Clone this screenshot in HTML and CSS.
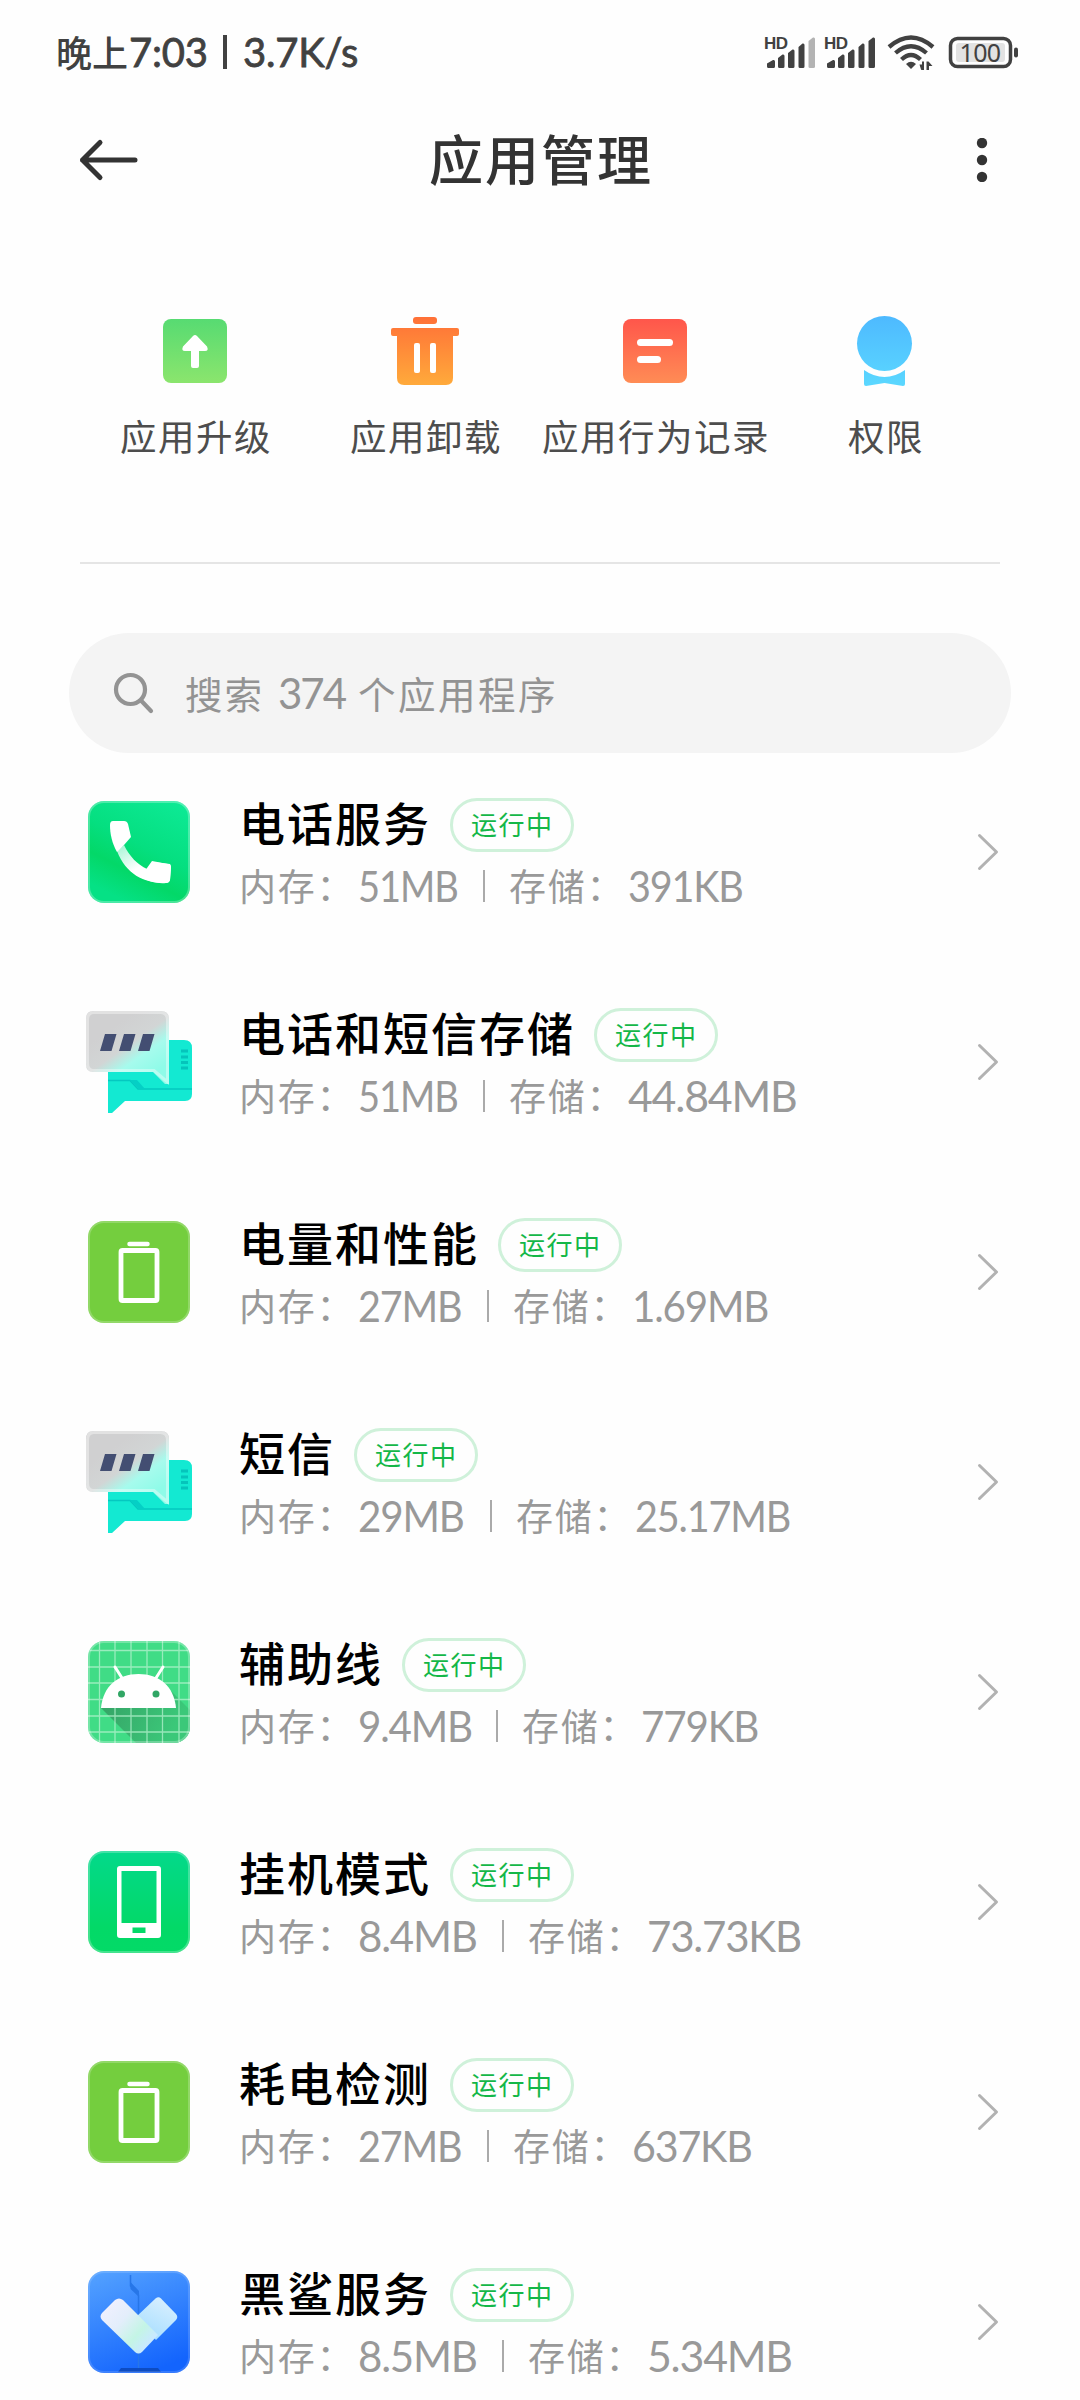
FILE: index.html
```html
<!DOCTYPE html>
<html lang="zh-CN">
<head>
<meta charset="utf-8">
<title>应用管理</title>
<link rel="stylesheet" href="styles.css">
</head>
<body>
<svg class="defs" width="0" height="0" aria-hidden="true">
  <defs>
    <linearGradient id="gUp" x1="0" y1="0" x2="0" y2="1"><stop offset="0" stop-color="#57db72"/><stop offset="1" stop-color="#8be56d"/></linearGradient>
    <linearGradient id="gTrash" gradientUnits="userSpaceOnUse" x1="0" y1="4" x2="0" y2="72"><stop offset="0" stop-color="#ff7037"/><stop offset="1" stop-color="#ffaa3b"/></linearGradient>
    <linearGradient id="gLog" x1="0" y1="0" x2="0" y2="1"><stop offset="0" stop-color="#ff564b"/><stop offset="1" stop-color="#ff8c55"/></linearGradient>
    <linearGradient id="gPerm" gradientUnits="userSpaceOnUse" x1="0" y1="4" x2="0" y2="74"><stop offset="0" stop-color="#4ebaff"/><stop offset="1" stop-color="#5bd8ff"/></linearGradient>
    <linearGradient id="gCall" x1=".9" y1="0" x2=".4" y2="1"><stop offset="0" stop-color="#0dea96"/><stop offset=".5" stop-color="#05df80"/><stop offset=".75" stop-color="#03d868"/><stop offset="1" stop-color="#05e185"/></linearGradient>
    <linearGradient id="gHandset" gradientUnits="userSpaceOnUse" x1="31" y1="49" x2="48" y2="74"><stop offset="0" stop-color="#a4f5d4"/><stop offset="1" stop-color="#fff"/></linearGradient>
    <linearGradient id="gBubble" gradientUnits="userSpaceOnUse" x1="25" y1="22" x2="60" y2="72"><stop offset="0" stop-color="#d0d0d1"/><stop offset=".38" stop-color="#d2d5d5"/><stop offset=".65" stop-color="#a6fbed"/><stop offset="1" stop-color="#8ffbe8"/></linearGradient>
    <linearGradient id="gPhone" x1="0" y1="0" x2="0" y2="1"><stop offset="0" stop-color="#03d98b"/><stop offset=".75" stop-color="#03d967"/><stop offset="1" stop-color="#03da67"/></linearGradient>
    <linearGradient id="gShark" x1=".2" y1="0" x2=".6" y2="1"><stop offset="0" stop-color="#519fff"/><stop offset="1" stop-color="#1364fd"/></linearGradient>
    <linearGradient id="gHeartA" gradientUnits="userSpaceOnUse" x1="20" y1="38" x2="64" y2="76"><stop offset="0" stop-color="#f0f0ff"/><stop offset=".4" stop-color="#e3eefb"/><stop offset=".75" stop-color="#c4f5e5"/><stop offset="1" stop-color="#c9e9ff"/></linearGradient>
    <linearGradient id="gHeartB" gradientUnits="userSpaceOnUse" x1="80" y1="30" x2="62" y2="66"><stop offset="0" stop-color="#d7efff"/><stop offset="1" stop-color="#aadfff"/></linearGradient>
    <linearGradient id="gShade" gradientUnits="userSpaceOnUse" x1="25" y1="68" x2="85" y2="100"><stop offset="0" stop-color="#36a768"/><stop offset="1" stop-color="#3bc879"/></linearGradient>
    <clipPath id="tile"><rect x="4" y="3" width="102" height="102" rx="16"/></clipPath>

    <symbol id="i-call" viewBox="0 0 110 108">
      <rect x="4" y="3" width="102" height="102" rx="16" fill="url(#gCall)"/>
      <rect x="5" y="4" width="100" height="100" rx="15" fill="none" stroke="#fff" stroke-opacity=".28" stroke-width="2"/>
      <path d="M33 53 40 47C45 58 54 67 63 71L69 64 86 66Q87 67 87 69L86 82Q85 85 82 85C59 85 42 76 33 53Z" fill="url(#gHandset)"/>
      <path d="M29 23H40Q43 23 44 26L47 39 40 47 33 54C28 45 26 36 26 27Q26 23 29 23Z" fill="#fff"/>
      <path d="M63 70 68 63 84 66Q87 67 87 69L86 82Q85 85 82 85C73 86 64 83 56 79Z" fill="#fff"/>
    </symbol>
    <symbol id="i-sms" viewBox="0 0 110 108">
      <path d="M24 32H100Q108 32 108 40V86Q108 93 101 93H41L28 105H24Z" fill="#13e9d2"/>
      <path d="M24 72.500H46L54 81H108" fill="none" stroke="#05c8c0" stroke-width="1.500"/>
      <path d="M46 72H53L61 81H55Z" fill="#05cfc5"/>
      <path d="M97 43h7M97 49h7M97 54.500h7M97 60h7" stroke="#05c4bb" stroke-width="3"/>
      <path d="M9 3H77Q85 3 85 11V76H81L69 64H9Q2 64 2 56V11Q2 3 9 3Z" fill="url(#gBubble)"/>
      <path d="M10 4.500H76Q83.500 4.500 83.500 12V74L70 62.500H10Q3.500 62.500 3.500 55V12Q3.500 4.500 10 4.500Z" fill="none" stroke="#fff" stroke-opacity=".38" stroke-width="3"/>
      <path d="M21 26h11.500l-5 17H16ZM40 26h11.500l-5 17H35ZM59 26h11.500l-5 17H54Z" fill="#434e72"/>
    </symbol>
    <symbol id="i-power" viewBox="0 0 110 108">
      <rect x="4" y="3" width="102" height="102" rx="16" fill="#74ce3e"/>
      <rect x="5" y="4" width="100" height="100" rx="15" fill="none" stroke="#fff" stroke-opacity=".22" stroke-width="2"/>
      <path d="M45.500 26H63.500" stroke="#fff" stroke-width="4.500" stroke-linecap="round"/>
      <rect x="37" y="32.500" width="36" height="50" rx="1.500" fill="none" stroke="#fff" stroke-width="4.800"/>
    </symbol>
    <symbol id="i-android" viewBox="0 0 110 108">
      <g clip-path="url(#tile)">
        <path d="M4 3h102v102H4z" fill="#40dc86"/>
        <path d="M17 70H92L86 52 106 72V105H52Z" fill="url(#gShade)"/>
        <path d="M15.500 3V105M31 3V105M47 3V105M63 3V105M78.500 3V105M95 3V105M4 12.500H106M4 29H106M4 45H106M4 61.500H106M4 78H106M4 94H106" stroke="#b5f1cf" stroke-opacity=".75" stroke-width="1.300"/>
        <path d="M17 70C19 48 34 36 54.500 36S90 48 92 70Z" fill="#fff"/>
        <path d="M31 29 38 40M79 29 72 40" stroke="#fff" stroke-width="3" stroke-linecap="round"/>
        <circle cx="37.500" cy="56" r="3.500" fill="#31a665"/><circle cx="72" cy="56" r="3.500" fill="#31a665"/>
      </g>
      <rect x="5" y="4" width="100" height="100" rx="15" fill="none" stroke="#fff" stroke-opacity=".28" stroke-width="2"/>
    </symbol>
    <symbol id="i-phone" viewBox="0 0 110 108">
      <rect x="4" y="3" width="102" height="102" rx="16" fill="url(#gPhone)"/>
      <rect x="5" y="4" width="100" height="100" rx="15" fill="none" stroke="#fff" stroke-opacity=".25" stroke-width="2"/>
      <path fill-rule="evenodd" d="M36 18H74Q77 18 77 21V87Q77 90 74 90H36Q33 90 33 87V21Q33 18 36 18ZM37.500 23V75H72.500V23ZM48.500 79.500V85H61.500V79.500Z" fill="#fff"/>
    </symbol>
    <symbol id="i-shark" viewBox="0 0 110 108">
      <rect x="4" y="3" width="102" height="102" rx="16" fill="url(#gShark)"/>
      <path d="M46.500 7V18L54.500 27V100" fill="none" stroke="#2776e8" stroke-width="1.500"/>
      <path d="M46.500 14 55 23V29L46.500 21Z" fill="#2776e8"/>
      <path d="M34 104 37 100H74L77 104Z" fill="#0d4cc2"/>
      <path d="M51 50 71.500 30.500Q74.500 28 77 30.500L92 46Q94.500 49 92 52L72 72Z" fill="url(#gHeartB)"/>
      <path d="M18 45 31 32Q35 29 39 32L74 67 58 84Q54.500 87 51 84L18 52Q15 48.500 18 45Z" fill="url(#gHeartA)"/>
      <rect x="5" y="4" width="100" height="100" rx="15" fill="none" stroke="#fff" stroke-opacity=".15" stroke-width="2"/>
    </symbol>
    <symbol id="i-chevron" viewBox="0 0 24 40"><path d="M3.500 3.500 20.500 20 3.500 36.500" fill="none" stroke="#b2b2b2" stroke-width="3" stroke-linecap="round" stroke-linejoin="round"/></symbol>
  </defs>
</svg>

<header class="status">
  <div class="status-left"><span class="status-cjk">晚上</span><span class="status-time">7:03</span><i class="status-bar"></i><span class="status-speed">3.7K/s</span></div>
  <svg class="status-icons" width="260" height="40" viewBox="0 0 260 40">
    <g fill="#414141">
      <text class="hd" x="4" y="18.500" textLength="24">HD</text>
      <path d="M7 36.500V33.500L13 30Q15 29.500 15 31.500V36.500Q15 38 13.500 38H8.500Q7 38 7 36.500ZM18 36.500V28L22.500 24.500Q24.500 24 24.500 26V36.500Q24.500 38 23 38H19.500Q18 38 18 36.500ZM28 36.500V23L32.500 19.500Q34.500 19 34.500 21V36.500Q34.500 38 33 38H29.500Q28 38 28 36.500ZM38.500 36.500V17L42.500 13.500Q44.500 13 44.500 15V36.500Q44.500 38 43 38H40Q38.500 38 38.500 36.500Z"/>
      <path d="M48.500 36.500V11L53 7.500Q55 7 55 9V36.500Q55 38 53.500 38H50Q48.500 38 48.500 36.500Z" fill="#b3b3b3"/>
      <text class="hd" x="64" y="18.500" textLength="24">HD</text>
      <path d="M67 36.500V33.500L73 30Q75 29.500 75 31.500V36.500Q75 38 73.500 38H68.500Q67 38 67 36.500ZM78 36.500V28L82.500 24.500Q84.500 24 84.500 26V36.500Q84.500 38 83 38H79.500Q78 38 78 36.500ZM88 36.500V23L92.500 19.500Q94.500 19 94.500 21V36.500Q94.500 38 93 38H89.500Q88 38 88 36.500ZM98.500 36.500V17L102.500 13.500Q104.500 13 104.500 15V36.500Q104.500 38 103 38H100Q98.500 38 98.500 36.500ZM108.500 36.500V11L113 7.500Q115 7 115 9V36.500Q115 38 113.500 38H110Q108.500 38 108.500 36.500Z"/>
      <path d="M146 34Q151 29.500 156 34L151 39Z"/>
      <path d="M161 39.500 159.500 34.500H162V31.500H164V40.500H162ZM166.500 31.500H168.500L172.500 36H169V40.500H166.500Z"/>
    </g>
    <g fill="none" stroke="#414141" stroke-width="4.300">
      <path d="M129 17Q151 -2 173 17"/><path d="M135.500 23Q151 9.500 166.500 23"/><path d="M141.500 29.500Q151 20.500 160.500 29.500"/>
      <rect x="190.500" y="8.500" width="60" height="28" rx="7" stroke-width="3.500"/>
    </g>
    <rect x="196" y="13" width="49" height="19" rx="3" fill="#e2e2e2"/>
    <rect x="254" y="17.500" width="4" height="10" rx="2" fill="#414141"/>
    <text class="battery" x="220" y="31.500" text-anchor="middle">100</text>
  </svg>
</header>

<nav class="appbar">
  <svg width="60" height="44" viewBox="0 0 60 44"><path d="M22 4.500 4.500 22 22 39.500M4.500 22H57" fill="none" stroke="#333" stroke-width="5" stroke-linecap="round" stroke-linejoin="round"/></svg>
  <h1>应用管理</h1>
  <svg width="60" height="44" viewBox="0 0 60 44"><g fill="#333"><circle cx="42" cy="5" r="5.200"/><circle cx="42" cy="22" r="5.200"/><circle cx="42" cy="39" r="5.200"/></g></svg>
</nav>

<section class="actions">
  <div class="action"><svg viewBox="0 0 80 80"><rect x="8" y="6" width="64" height="64" rx="8" fill="url(#gUp)"/><path d="M38 23Q40 21 42 23L52 33.500Q54 38 50 38H44V53Q44 55 42 55H38Q36 55 36 53V38H30Q26 38 28 33.500Z" fill="#fff"/></svg><span>应用升级</span></div>
  <div class="action"><svg viewBox="0 0 80 80"><g fill="url(#gTrash)"><rect x="28" y="4" width="24" height="7" rx="3"/><path d="M8 15H72Q74 15 74 17V21Q74 23 72 23H68V65Q68 72 61 72H19Q12 72 12 65V23H8Q6 23 6 21V17Q6 15 8 15Z"/></g><rect x="29" y="30" width="6" height="30" rx="2" fill="#fff"/><rect x="45" y="30" width="6" height="30" rx="2" fill="#fff"/></svg><span>应用卸载</span></div>
  <div class="action"><svg viewBox="0 0 80 80"><rect x="8" y="6" width="64" height="64" rx="8" fill="url(#gLog)"/><rect x="22" y="26" width="36" height="7" rx="3.500" fill="#fff"/><rect x="22" y="43" width="24" height="7" rx="3.500" fill="#fff"/></svg><span>应用行为记录</span></div>
  <div class="action"><svg viewBox="0 0 80 80"><g fill="url(#gPerm)"><circle cx="39.500" cy="30.500" r="27.500"/><path d="M19 57Q29 64 39.500 64T60 57V71Q60 73 58 73L39.500 70 21 73Q19 73 19 71Z"/></g></svg><span>权限</span></div>
</section>

<div class="search">
  <svg width="44" height="44" viewBox="0 0 44 44"><g fill="none" stroke="#939393" stroke-width="4.200" stroke-linecap="round"><circle cx="19.500" cy="18.500" r="14.500"/><path d="M30 29.500 40 40"/></g></svg>
  <span class="search-a">搜索</span><span class="search-n">374</span><span class="search-b">个应用程序</span>
</div>

<main class="apps">
  <article class="app"><svg class="app-icon"><use href="#i-call"/></svg><div class="info"><div class="head"><h2>电话服务</h2><span class="badge">运行中</span></div><div class="meta"><span class="label">内存：</span><span class="value w100 n90">51MB</span><i></i><span class="label">存储：</span><span class="value w115 n94">391KB</span></div></div><svg class="chevron"><use href="#i-chevron"/></svg></article>
  <article class="app"><svg class="app-icon"><use href="#i-sms"/></svg><div class="info"><div class="head"><h2>电话和短信存储</h2><span class="badge">运行中</span></div><div class="meta"><span class="label">内存：</span><span class="value w100 n90">51MB</span><i></i><span class="label">存储：</span><span class="value w169 n102">44.84MB</span></div></div><svg class="chevron"><use href="#i-chevron"/></svg></article>
  <article class="app"><svg class="app-icon"><use href="#i-power"/></svg><div class="info"><div class="head"><h2>电量和性能</h2><span class="badge">运行中</span></div><div class="meta"><span class="label">内存：</span><span class="value w104 n94">27MB</span><i></i><span class="label">存储：</span><span class="value w136 n96">1.69MB</span></div></div><svg class="chevron"><use href="#i-chevron"/></svg></article>
  <article class="app"><svg class="app-icon"><use href="#i-sms"/></svg><div class="info"><div class="head"><h2>短信</h2><span class="badge">运行中</span></div><div class="meta"><span class="label">内存：</span><span class="value w107 n96">29MB</span><i></i><span class="label">存储：</span><span class="value w154 n94">25.17MB</span></div></div><svg class="chevron"><use href="#i-chevron"/></svg></article>
  <article class="app"><svg class="app-icon"><use href="#i-android"/></svg><div class="info"><div class="head"><h2>辅助线</h2><span class="badge">运行中</span></div><div class="meta"><span class="label">内存：</span><span class="value w113 n96">9.4MB</span><i></i><span class="label">存储：</span><span class="value w119 n96">779KB</span></div></div><svg class="chevron"><use href="#i-chevron"/></svg></article>
  <article class="app"><svg class="app-icon"><use href="#i-phone"/></svg><div class="info"><div class="head"><h2>挂机模式</h2><span class="badge">运行中</span></div><div class="meta"><span class="label">内存：</span><span class="value w119">8.4MB</span><i></i><span class="label">存储：</span><span class="value w154">73.73KB</span></div></div><svg class="chevron"><use href="#i-chevron"/></svg></article>
  <article class="app"><svg class="app-icon"><use href="#i-power"/></svg><div class="info"><div class="head"><h2>耗电检测</h2><span class="badge">运行中</span></div><div class="meta"><span class="label">内存：</span><span class="value w104 n94">27MB</span><i></i><span class="label">存储：</span><span class="value w119 n98">637KB</span></div></div><svg class="chevron"><use href="#i-chevron"/></svg></article>
  <article class="app"><svg class="app-icon"><use href="#i-shark"/></svg><div class="info"><div class="head"><h2>黑鲨服务</h2><span class="badge">运行中</span></div><div class="meta"><span class="label">内存：</span><span class="value w119">8.5MB</span><i></i><span class="label">存储：</span><span class="value w143 n102">5.34MB</span></div></div><svg class="chevron"><use href="#i-chevron"/></svg></article>
</main>
</body>
</html>
```
FILE: styles.css
```css
* { box-sizing: border-box; }
html, body { margin: 0; }
body {
  width: 1080px;
  height: 2400px;
  overflow: hidden;
  background: #fefefe;
  font-family: "Noto Sans CJK SC", sans-serif;
  display: flex;
  flex-direction: column;
}
.defs { display: block; flex: none; height: 0; }
h1, h2 { margin: 0; font-weight: 500; }

.status {
  height: 104px;
  flex: none;
  display: flex;
  justify-content: space-between;
  padding: 30px 60px 0 56px;
  color: #414141;
}
.status-left { display: flex; align-items: center; height: 44px; font-size: 40px; line-height: 44px; white-space: nowrap; }
.status-cjk { width: 73px; padding-bottom: 3px; font-size: 36px; font-weight: 500; }
.status-time, .status-speed { font-family: Lato, sans-serif; font-weight: 400; letter-spacing: -.2px; -webkit-text-stroke: .8px #414141; }
.status-time { width: 94px; }
.status-bar { width: 4px; height: 34px; margin-right: 16px; background: #414141; }
.hd { font: 700 17px "Liberation Sans", sans-serif; }
.battery { font: 400 25px "Noto Sans", sans-serif; letter-spacing: -.6px; fill: #414141; }

.appbar {
  height: 112px;
  flex: none;
  display: flex;
  justify-content: space-between;
  align-items: center;
  padding: 0 80px 0 78px;
  color: #333;
}
.appbar h1 { padding: 0 0 4px 4px; font-size: 54px; line-height: 80px; letter-spacing: 2px; }

.actions {
  height: 348px;
  flex: none;
  margin: 0 80px;
  padding-top: 97px;
  border-bottom: 2px solid #e5e5e5;
  display: grid;
  grid-template-columns: repeat(4, 230px);
}
.action { display: flex; flex-direction: column; align-items: center; color: #4d4d4d; }
.action svg { width: 80px; height: 80px; }
.action span { margin-top: 15px; padding-left: 2px; font-size: 36.5px; line-height: 56px; letter-spacing: 1.5px; white-space: nowrap; }

.search {
  height: 120px;
  flex: none;
  margin: 69px 69px 0;
  padding: 0 0 1px 42px;
  display: flex;
  align-items: center;
  border-radius: 60px;
  background: #f4f4f4;
  color: #939393;
  font-size: 37.5px;
  letter-spacing: 2px;
}
.search-a { margin-left: 30px; width: 93px; }
.search-n { width: 80px; font-family: Lato, sans-serif; font-size: 42px; letter-spacing: -2px; }
.search-b { letter-spacing: 2.500px; }

.apps { margin-top: -6px; }
.app { display: flex; height: 210px; padding: 51px 78px 0 84px; }
.app-icon { width: 110px; height: 108px; flex: none; }
.info { flex: 1; padding-left: 45px; }
.head { display: flex; height: 54px; align-items: center; }
.head h2 { padding-bottom: 9px; font-size: 46px; line-height: 54px; letter-spacing: 2px; color: #000; white-space: nowrap; }
.badge {
  width: 124px;
  height: 54px;
  margin-left: 19px;
  border: 3px solid #cff1da;
  border-radius: 27px;
  color: #14b748;
  font-size: 26px;
  line-height: 46px;
  letter-spacing: 1.5px;
  padding-left: 18px;
  white-space: nowrap;
}
.meta { display: flex; align-items: center; height: 68px; color: #999; }
.meta i { width: 2px; height: 32px; margin: 0 24px 0 25px; background: #aaa; }
.label { width: 119px; padding-bottom: 2px; font-size: 37px; letter-spacing: 1.800px; white-space: nowrap; }
.value { font-family: Lato, sans-serif; font-size: 42px; letter-spacing: -1.200px; white-space: nowrap; transform-origin: 0 50%; }
.w100 { width: 100px; }
.w104 { width: 104px; }
.w107 { width: 107px; }
.w113 { width: 113px; }
.w115 { width: 115px; }
.w119 { width: 119px; }
.w136 { width: 136px; }
.w143 { width: 143px; }
.w154 { width: 154px; }
.w169 { width: 169px; }
.n90 { transform: scaleX(.905); }
.n94 { transform: scaleX(.94); }
.n96 { transform: scaleX(.96); }
.n98 { transform: scaleX(.98); }
.n102 { transform: scaleX(1.02); }
.chevron { width: 24px; height: 40px; margin: 34px 2px 0 0; flex: none; }
```
